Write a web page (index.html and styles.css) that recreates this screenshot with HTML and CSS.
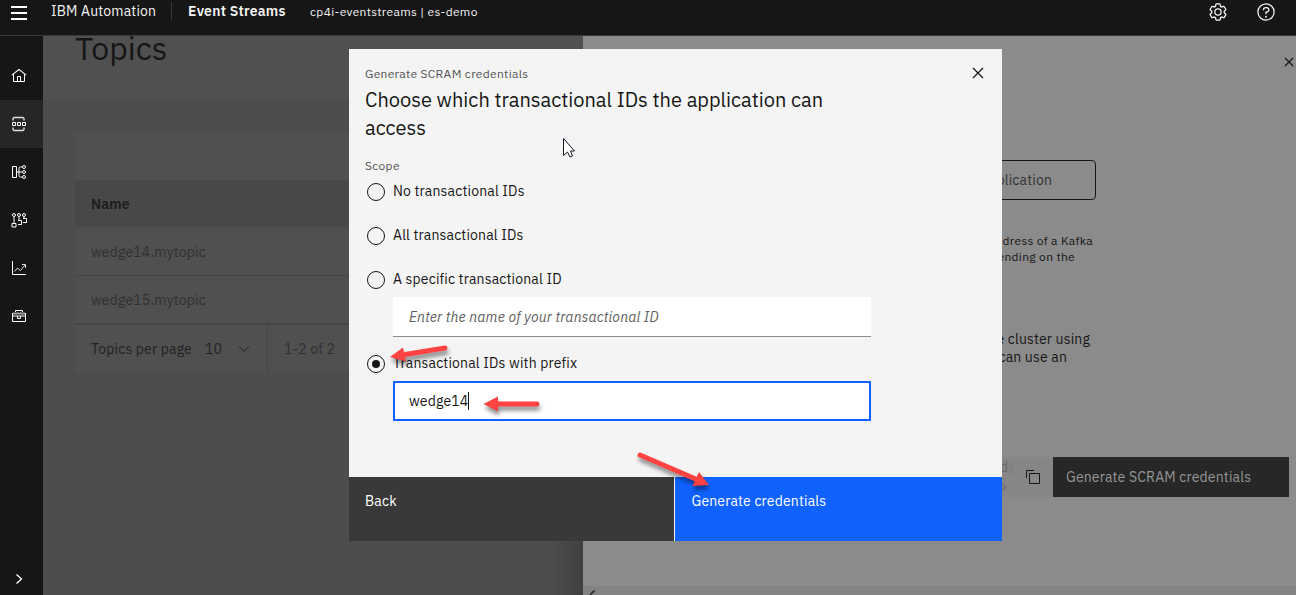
FILE: index.html
```html
<!DOCTYPE html>
<html lang="en">
<head>
<meta charset="utf-8">
<title>Event Streams</title>
<link rel="stylesheet" href="styles.css">
</head>
<body>
<header class="header">
  <svg class="burger" width="16" height="16" viewBox="0 0 16 16"><path d="M0 1h16M0 7h16M0 13h16" stroke="#fff" stroke-width="2"/></svg>
  <span class="brand">IBM Automation</span>
  <span class="product">Event Streams</span>
  <span class="instance">cp4i-eventstreams | es-demo</span>
  <span class="header-actions">
    <svg width="20" height="20" viewBox="0 0 32 32" fill="#f4f4f4"><path d="M27,16.76c0-.25,0-.5,0-.76s0-.51,0-.77l1.92-1.68A2,2,0,0,0,29.3,11L26.94,7a2,2,0,0,0-1.73-1,2,2,0,0,0-.64.1l-2.43.82a11.35,11.35,0,0,0-1.31-.75l-.51-2.52a2,2,0,0,0-2-1.61H13.64a2,2,0,0,0-2,1.61l-.51,2.52a11.48,11.48,0,0,0-1.32.75L7.43,6.06A2,2,0,0,0,6.79,6,2,2,0,0,0,5.06,7L2.7,11a2,2,0,0,0,.41,2.51L5,15.24c0,.25,0,.5,0,.76s0,.51,0,.77L3.11,18.45A2,2,0,0,0,2.7,21L5.06,25a2,2,0,0,0,1.73,1,2,2,0,0,0,.64-.1l2.43-.82a11.35,11.35,0,0,0,1.31.75l.51,2.52a2,2,0,0,0,2,1.61h4.72a2,2,0,0,0,2-1.61l.51-2.52a11.48,11.48,0,0,0,1.32-.75l2.42.82a2,2,0,0,0,.64.1,2,2,0,0,0,1.73-1L29.3,21a2,2,0,0,0-.41-2.51ZM25.21,24l-3.43-1.16a8.86,8.86,0,0,1-2.71,1.57L18.36,28H13.64l-.71-3.55a9.36,9.36,0,0,1-2.7-1.57L6.79,24,4.43,20l2.72-2.4a8.9,8.9,0,0,1,0-3.13L4.43,12,6.79,8l3.43,1.16a8.86,8.86,0,0,1,2.71-1.57L13.64,4h4.72l.71,3.55a9.36,9.36,0,0,1,2.7,1.57L25.21,8,27.57,12l-2.72,2.4a8.9,8.9,0,0,1,0,3.13L27.57,20Z"/><path d="M16,22a6,6,0,1,1,6-6A5.94,5.94,0,0,1,16,22Zm0-10a3.91,3.91,0,0,0-4,4,3.91,3.91,0,0,0,4,4,3.91,3.91,0,0,0,4-4A3.91,3.91,0,0,0,16,12Z"/></svg>
    <svg width="20" height="20" viewBox="0 0 32 32" fill="#f4f4f4"><circle cx="16" cy="16" r="13" fill="none" stroke="#f4f4f4" stroke-width="2"/><circle cx="16" cy="23.5" r="1.5"/><path d="M17,8H15.5A4.49,4.49,0,0,0,11,12.5V13h2v-.5A2.5,2.5,0,0,1,15.5,10H17a2.5,2.5,0,0,1,0,5H15v4.5h2V17a4.5,4.5,0,0,0,0-9Z"/></svg>
  </span>
</header>
<div class="shell">
  <nav class="rail">
    <span class="rail-item"><svg width="16" height="16" viewBox="0 0 32 32" fill="#fff"><path d="M16.6123,2.2138a1.01,1.01,0,0,0-1.2427,0L1,13.4194l1.2427,1.5717L4,13.6208V26a2.0041,2.0041,0,0,0,2,2H26a2.0037,2.0037,0,0,0,2-2V13.63L29.7573,15,31,13.4282ZM18,26H14V18h4Zm2,0V18a2.0023,2.0023,0,0,0-2-2H14a2.002,2.002,0,0,0-2,2v8H6V12.0615l10-7.79,10,7.8005V26Z"/></svg></span>
    <span class="rail-item active"><svg width="16" height="16" viewBox="0 0 16 16" class="line"><path d="M2 4.500V2.500L3 1.500h9l1 1v2M2 11.500v2l1 1h9l1-1v-2" opacity=".85" stroke-width="1.400"/><path d="M1.500 6.500h3v3h-3zM6.500 6.500h3v3h-3zM11.500 6.500h3v3h-3z"/></svg></span>
    <span class="rail-item"><svg width="16" height="16" viewBox="0 0 16 16" class="line"><path d="M1.500 2.500h4v11h-4zM6 8h5M11 3H9.500Q8 3 8 4.500v7Q8 13 9.500 13H11"/><circle cx="13" cy="3" r="1.500"/><circle cx="13" cy="8" r="1.500"/><circle cx="13" cy="13" r="1.500"/></svg></span>
    <span class="rail-item"><svg width="16" height="16" viewBox="0 0 16 16" class="line"><circle cx="3" cy="3" r="1.500"/><circle cx="8" cy="3" r="1.500"/><circle cx="13" cy="3" r="1.500"/><path d="M3 5v6M8 5v4M13 5v2M1 11.500h4v3.500H1zM7 8.500h3.500v4H7M12 6.500h3.500v4H12"/></svg></span>
    <span class="rail-item"><svg width="16" height="16" viewBox="0 0 16 16" class="line"><path d="M1.500 1v13.500H15"/><path d="M3.500 11.500L6.500 8l3 2.500L14 5M11 4.500h3.500V8" opacity=".85"/></svg></span>
    <span class="rail-item"><svg width="16" height="16" viewBox="0 0 16 16" class="line"><path d="M1.500 5v8.500h13V5M4.500 4V2.500h7V4M1.500 8h13M6.500 8v2.500h3V8"/><path d="M2 5.500h12" opacity=".6" stroke-width="2"/></svg></span>
    <span class="rail-expand"><svg width="16" height="16" viewBox="0 0 16 16" class="line"><path d="M5.500 3.500L10.500 8l-5 4.500" stroke-width="1.300"/></svg></span>
  </nav>
  <main class="page">
    <div class="page-head"><h1>Topics</h1></div>
    <section class="table">
      <div class="toolbar"></div>
      <div class="row head">Name</div>
      <div class="row">wedge14.mytopic</div>
      <div class="row">wedge15.mytopic</div>
      <div class="pager">
        <div class="per-page"><span>Topics per page</span><span class="count">10</span><svg width="16" height="16" viewBox="0 0 16 16"><path d="M3 5.500l5 5 5-5" fill="none" stroke="#222" stroke-width="1"/></svg></div>
        <div class="range">1-2 of 2</div>
      </div>
    </section>
  </main>
  <aside class="drawer">
    <svg class="drawer-close" width="10" height="10" viewBox="0 0 10 10"><path d="M1 1l8 8M9 1L1 9" stroke="#161616" stroke-width="1.200"/></svg>
    <div class="app-button">application</div>
    <div class="hint"><p class="h1">address of a Kafka</p><p class="h2">pending on the</p></div>
    <div class="body-text"><p class="b1">the cluster using</p><p class="b2">can use an</p></div>
    <div class="cred-row">
      <div class="snippet"><span class="snip">d<i>g</i><br><b>&gt;</b></span><svg width="16" height="16" viewBox="0 0 16 16"><path d="M4.500 4.500h10v10h-10zM1.500 9V1.500H9" fill="none" stroke="#161616"/></svg></div>
      <div class="scram">Generate SCRAM credentials</div>
    </div>
    <div class="drawer-foot"><svg width="9" height="9" viewBox="0 0 9 9"><path d="M6.500 4.500L2 9" fill="none" stroke="#333" stroke-width="1.800"/></svg></div>
  </aside>
</div>
<div class="modal">
  <div class="modal-body">
    <svg class="modal-close" width="12" height="12" viewBox="0 0 12 12"><path d="M1 1l10 10M11 1L1 11" stroke="#161616" stroke-width="1.300"/></svg>
    <p class="label">Generate SCRAM credentials</p>
    <h2>Choose which transactional IDs the application can<br>access</h2>
    <p class="scope">Scope</p>
    <div class="option"><span class="radio"></span><span>No transactional IDs</span></div>
    <div class="option"><span class="radio"></span><span>All transactional IDs</span></div>
    <div class="option with-field"><span class="radio"></span><span>A specific transactional ID</span></div>
    <div class="field"><span class="placeholder">Enter the name of your transactional ID</span></div>
    <div class="option with-field"><span class="radio checked"></span><span>Transactional IDs with prefix</span></div>
    <div class="field focused"><span>wedge14</span><span class="caret"></span></div>
  </div>
  <div class="modal-foot">
    <div class="back">Back</div>
    <div class="primary">Generate credentials</div>
  </div>
</div>
<svg class="marks" width="1296" height="595" viewBox="0 0 1296 595">
  <g class="arrows">
    <path d="M445 348L402 355M537 404H497M640 455L698 480" stroke="#ff4343" stroke-width="5" stroke-linecap="round"/>
    <path d="M390 357L403 347.500L406 361.500ZM483.500 404L498 396.500V411.500ZM709 485L699 472L692.500 486Z" fill="#ff4343"/>
  </g>
  <path d="M563.500 138.500v17l4-3.500 2.500 5 2.500-1-2-5h4z" fill="#fff" stroke="#161625"/>
</svg>
</body>
</html>
```
FILE: styles.css
```css
* { box-sizing: border-box; }
body { margin: 0; width: 1296px; height: 595px; overflow: hidden; position: relative; display: flex; flex-direction: column; background: #4d4d4d; font: 14px/18px "IBM Plex Sans", Roboto, "Noto Sans", sans-serif; letter-spacing: .16px; color: #161616; }
p, h1, h2 { margin: 0; font-weight: 400; white-space: nowrap; }
svg { display: block; flex: none; }
span, div { white-space: nowrap; }
.line { fill: none; stroke: #fff; stroke-width: 1; }

.header { height: 36px; flex: none; display: flex; align-items: flex-start; background: #161616; border-bottom: 1px solid #393939; color: #f4f4f4; padding-left: 11px; }
.burger { margin-top: 6px; }
.brand { margin: 2px 0 0 24px; width: 121px; height: 18px; border-right: 1px solid #393939; line-height: 19px; }
.product { margin: 2px 0 0 16px; width: 122px; font-weight: 600; letter-spacing: .25px; line-height: 19px; }
.instance { margin-top: 3px; font-size: 12px; letter-spacing: .32px; }
.header-actions { margin: 2px 20px 0 auto; display: flex; gap: 28px; }

.shell { flex: 1; display: flex; min-height: 0; }
.rail { width: 43px; background: #161616; padding-top: 16px; display: flex; flex-direction: column; }
.rail-item { height: 48px; display: flex; align-items: center; padding-left: 11px; }
.rail-item.active { background: #262626; }
.rail-expand { margin-top: auto; padding: 0 0 8px 11px; }

.page { width: 540px; background: linear-gradient(90deg, transparent 94%, rgba(0,0,0,.18)), #4d4d4d; }
.page-head { height: 64px; background: #505050; padding-left: 32px; overflow: hidden; }
h1 { font-size: 32px; line-height: 40px; margin-top: -8px; letter-spacing: 0; }
.table { margin: 32px 0 0 32px; width: 480px; background: #505050; }
.toolbar { height: 48px; }
.row { height: 48px; border-bottom: 1px solid #454545; padding-left: 16px; line-height: 49px; color: #303030; }
.row.head { height: 48px; background: #484848; border-bottom: 1px solid #505050; font-weight: 600; color: #1c1c1c; line-height: 48px; }
.pager { display: flex; height: 49px; border-top: 1px solid #454545; color: #222; }
.per-page { width: 193px; border-right: 1px solid #454545; padding-left: 16px; display: flex; align-items: center; }
.count { margin: 0 14px 0 13px; }
.range { padding-left: 16px; color: #303030; line-height: 48px; }

.drawer { width: 713px; background: #8b8b8b; display: flex; flex-direction: column; }
.drawer-close { margin: 21px 2px 0 auto; }
.app-button { margin: 93px 0 0 317px; width: 196px; height: 40px; border: 1px solid #161616; border-radius: 4px; line-height: 39px; text-align: right; padding-right: 43px; color: #333; }
.hint { margin-top: 33px; font-size: 12px; line-height: 16px; text-align: right; letter-spacing: .32px; }
.h1 { padding-right: 203px; }
.h2 { padding-right: 221px; }
.body-text { margin-top: 65px; text-align: right; }
.b1 { padding-right: 206px; }
.b2 { padding-right: 229px; }
.cred-row { margin: 91px 0 0 397px; height: 40px; display: flex; }
.snippet { width: 73px; background: #868686; display: flex; align-items: center; justify-content: space-between; padding: 0 12px 0 20px; }
.snip { color: #666; line-height: 19px; }
.snip i { font-style: normal; opacity: .3; font-size: 11px; }
.snip b { font-weight: 700; opacity: .5; }
.scram { width: 236px; background: #272727; color: #969696; line-height: 41px; padding-left: 13px; }
.drawer-foot { margin-top: auto; height: 9px; background: #838383; padding-left: 5px; }

.modal { position: absolute; left: 349px; top: 49px; width: 653px; height: 492px; display: flex; flex-direction: column; background: #f4f4f4; }
.modal-body { flex: 1; padding: 17px 16px 0; position: relative; }
.modal-close { position: absolute; right: 18px; top: 18px; }
.label { font-size: 12px; line-height: 16px; color: #525252; letter-spacing: .32px; }
h2 { font-size: 20px; line-height: 28px; margin-top: 4px; letter-spacing: 0; }
.scope { margin-top: 16px; font-size: 12px; line-height: 16px; color: #525252; letter-spacing: .32px; }
.option { height: 20px; margin: 7px 0 24px; display: flex; align-items: center; line-height: 18px; }
.option + .option { margin-top: 0; }
.option.with-field { margin-bottom: 8px; }
.radio { width: 18px; height: 18px; border: 1px solid #161616; border-radius: 50%; margin: 1px 8px 0 2px; display: flex; align-items: center; justify-content: center; }
.radio.checked::before { content: ""; width: 8px; height: 8px; border-radius: 50%; background: #161616; }
.field { margin-left: 28px; width: 478px; height: 40px; background: #fff; border-bottom: 1px solid #8d8d8d; padding: 1px 0 0 16px; display: flex; align-items: center; }
.field + .option { margin-top: 16px; }
.placeholder { font-style: italic; color: #606060; }
.focused { border: 2px solid #0f62fe; padding: 0 0 0 14px; }
.caret { width: 1px; height: 18px; background: #161616; }
.modal-foot { height: 64px; display: flex; gap: 1px; color: #fff; line-height: 19px; }
.back { width: 325px; background: #393939; padding: 15px 16px; }
.primary { flex: 1; background: #0f62fe; padding: 15px 16px 15px 16.5px; }

.marks { position: absolute; left: 0; top: 0; }
.arrows { filter: drop-shadow(1px 4px 2px rgba(0,0,0,.45)); }
```
